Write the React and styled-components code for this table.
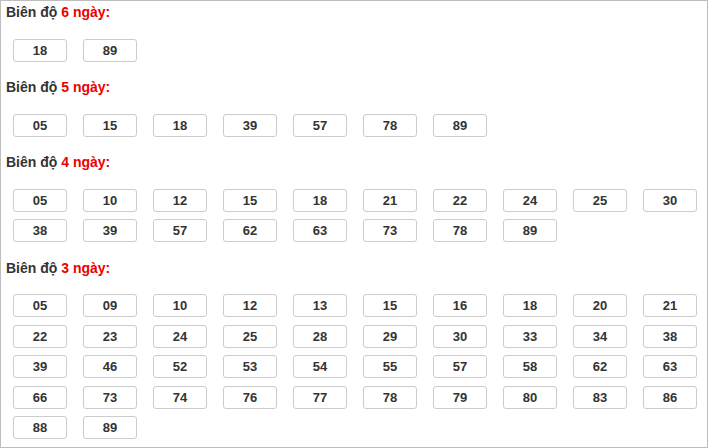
import React from 'react';
import styled, { createGlobalStyle } from 'styled-components';

const GlobalStyle = createGlobalStyle`
  html, body {
    margin: 0;
    padding: 0;
    background: #ffffff;
  }
  body {
    font-family: "Liberation Sans", Arial, sans-serif;
  }
`;

const Panel = styled.div`
  box-sizing: border-box;
  min-height: 100vh;
  border: 1px solid #bdbdbd;
  padding: 3px 5px 0 5px;
  display: flex;
  flex-direction: column;
  gap: 17.5px;
`;

const Section = styled.section`
  display: flex;
  flex-direction: column;
  gap: 17.5px;
`;

const Title = styled.div`
  font-size: 14px;
  line-height: 17px;
  font-weight: bold;
  color: #333333;
`;

const Red = styled.span`
  color: #ee0000;
`;

const NumberList = styled.div`
  display: flex;
  flex-wrap: wrap;
  column-gap: 16px;
  row-gap: 7.5px;
  padding-left: 7px;
  width: 690px;
`;

const NumberBox = styled.div`
  box-sizing: border-box;
  width: 54px;
  height: 23px;
  border: 1px solid #cccccc;
  border-radius: 3px;
  background: #ffffff;
  display: flex;
  align-items: center;
  justify-content: center;
  font-size: 13px;
  font-weight: bold;
  color: #333333;
`;

// Dữ liệu biên độ
const groups = [
  { days: 6, numbers: ['18', '89'] },
  { days: 5, numbers: ['05', '15', '18', '39', '57', '78', '89'] },
  {
    days: 4,
    numbers: ['05', '10', '12', '15', '18', '21', '22', '24', '25', '30',
      '38', '39', '57', '62', '63', '73', '78', '89'],
  },
  {
    days: 3,
    numbers: ['05', '09', '10', '12', '13', '15', '16', '18', '20', '21',
      '22', '23', '24', '25', '28', '29', '30', '33', '34', '38',
      '39', '46', '52', '53', '54', '55', '57', '58', '62', '63',
      '66', '73', '74', '76', '77', '78', '79', '80', '83', '86',
      '88', '89'],
  },
];

function App() {
  return (
    <>
      <GlobalStyle />
      <Panel>
        {groups.map((g) => (
          <Section key={g.days}>
            <Title>
              Biên độ <Red>{g.days} ngày:</Red>
            </Title>
            <NumberList>
              {g.numbers.map((n) => (
                <NumberBox key={n}>{n}</NumberBox>
              ))}
            </NumberList>
          </Section>
        ))}
      </Panel>
    </>
  );
}

export default App;
